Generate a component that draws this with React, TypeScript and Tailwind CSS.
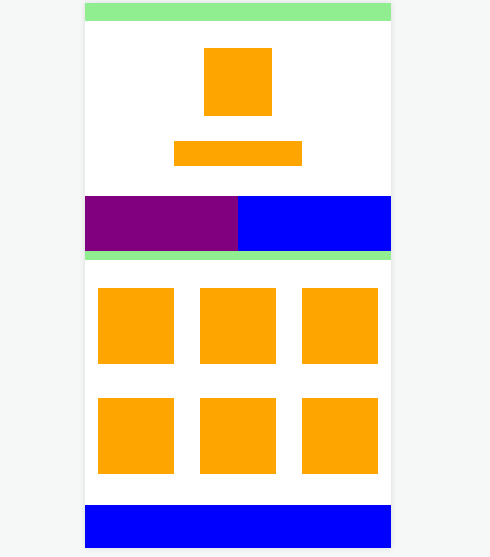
import React from "react";

const Tile = () => <div className="h-[76px] w-[76px] bg-[#ffa500]" />;

export default function App() {
  return (
    <div className="min-h-[557px] bg-[#f6f7f7] pl-[85px] pt-[3px]">
      <div className="flex w-[306px] flex-col bg-white shadow-[0_0_6px_rgba(0,0,0,0.12)]">
        {/* top bar */}
        <div className="h-[18px] bg-[#90ee90]" />

        {/* header */}
        <div className="flex h-[175px] flex-col items-center pt-[27px]">
          <div className="h-[68px] w-[68px] bg-[#ffa500]" />
          <div className="mt-[25px] h-[25px] w-[128px] bg-[#ffa500]" />
        </div>

        {/* split row */}
        <div className="flex h-[55px]">
          <div className="w-[153px] bg-[#800080]" />
          <div className="flex-1 bg-[#0000ff]" />
        </div>

        <div className="h-[9px] bg-[#90ee90]" />

        {/* grid */}
        <div className="grid h-[245px] grid-cols-3 content-start gap-x-[26px] gap-y-[34px] px-[13px] pt-[28px]">
          <Tile />
          <Tile />
          <Tile />
          <Tile />
          <Tile />
          <Tile />
        </div>

        {/* footer */}
        <div className="h-[43px] bg-[#0000ff]" />
      </div>
    </div>
  );
}
